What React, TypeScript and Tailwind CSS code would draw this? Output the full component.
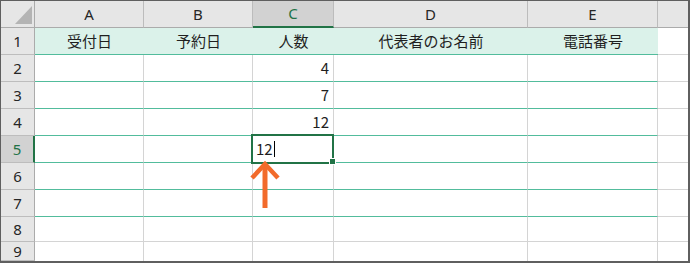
import React from "react";

const COLS = ["A", "B", "C", "D", "E"];
const COL_W = ["w-[109px]", "w-[109px]", "w-[81px]", "w-[194px]", "w-[130px]"];
const HEADERS = ["受付日", "予約日", "人数", "代表者のお名前", "電話番号"];
const PEOPLE: Record<number, string> = { 2: "4", 3: "7", 4: "12" };

const jp = { fontFamily: '"Noto Sans CJK JP", "Noto Sans", sans-serif' };
const ui = { fontFamily: '"Noto Sans", "Open Sans", sans-serif' };

function RowHeader({ n, h, active }: { n: number; h: string; active?: boolean }) {
  return (
    <div
      className={`${h} w-[34px] shrink-0 flex items-center justify-center border-b border-[#bdbdbd] text-[15px] ${
        active
          ? "bg-[#d2d2d2] text-[#217346] border-r-2 border-r-[#217346]"
          : "bg-[#e6e6e6] text-[#262626] border-r border-r-[#ababab]"
      }`}
      style={ui}
    >
      {n}
    </div>
  );
}

function Arrow() {
  return (
    <svg className="absolute left-[-3px] top-[24px]" width="30" height="50" viewBox="0 0 30 50">
      <line x1="15" y1="4" x2="15" y2="48" stroke="#f26b2b" strokeWidth="5" />
      <polyline
        points="2,18 15,4 28,18"
        fill="none"
        stroke="#f26b2b"
        strokeWidth="4.5"
        strokeLinejoin="miter"
      />
    </svg>
  );
}

function DataRow({ r }: { r: number }) {
  const h = r === 8 ? "h-[25px]" : r === 9 ? "h-[19px]" : "h-[27px]";
  const tableLine = r <= 7;
  const hLine = tableLine ? "border-b border-b-[#52bc9c]" : r === 9 ? "" : "border-b border-b-[#d4d4d4]";
  const active = r === 5;
  return (
    <div className="flex">
      <RowHeader n={r} h={h} active={active} />
      {COLS.map((c, i) => {
        const header = r === 1;
        const isC = i === 2;
        return (
          <div
            key={c}
            className={`${COL_W[i]} ${h} shrink-0 relative flex items-center text-[15px] text-[#1f1f1f] ${hLine} ${
              header
                ? "bg-[#dbf2ea] justify-center"
                : "bg-white border-r border-r-[#d4d4d4] justify-end pr-[4px]"
            }`}
            style={jp}
          >
            {header && HEADERS[i]}
            {!header && isC && PEOPLE[r]}
            {active && isC && (
              <>
                <div className="absolute left-[-2px] top-[-2px] w-[83px] h-[30px] border-2 border-[#217346] z-10" />
                <div className="absolute left-[76px] top-[22px] w-[7px] h-[7px] bg-[#217346] border border-white z-20" />
                <div className="absolute left-[3px] top-0 h-full flex items-center z-10">
                  <span>12</span>
                  <span className="ml-[1px] w-px h-[16px] bg-black" />
                </div>
                <div className="absolute left-0 top-0 z-30">
                  <Arrow />
                </div>
              </>
            )}
          </div>
        );
      })}
      <div
        className={`w-[30px] ${h} shrink-0 bg-white ${r === 9 ? "" : "border-b border-b-[#d4d4d4]"}`}
      />
    </div>
  );
}

export default function App() {
  return (
    <div className="w-[690px] h-[263px] overflow-hidden bg-white border-t border-l border-r-2 border-b-2 border-[#5f5f5f]">
      {/* column headers */}
      <div className="flex h-[27px]">
        <div className="w-[34px] shrink-0 bg-[#e6e6e6] border-r border-b border-[#ababab] relative">
          <svg className="absolute left-[14px] top-[5px]" width="17" height="18" viewBox="0 0 17 18">
            <polygon points="17,0 17,18 0,18" fill="#b4b4b4" />
          </svg>
        </div>
        {COLS.map((c, i) => (
          <div
            key={c}
            className={`${COL_W[i]} shrink-0 flex items-center justify-center text-[15px] border-r border-r-[#bcbcbc] ${
              i === 2
                ? "bg-[#d2d2d2] text-[#217346] border-b-2 border-b-[#217346]"
                : "bg-[#e6e6e6] text-[#262626] border-b border-b-[#ababab]"
            }`}
            style={ui}
          >
            {c}
          </div>
        ))}
        <div className="w-[30px] shrink-0 bg-[#e6e6e6] border-b border-[#ababab]" />
      </div>
      {[1, 2, 3, 4, 5, 6, 7, 8, 9].map((r) => (
        <DataRow key={r} r={r} />
      ))}
    </div>
  );
}
